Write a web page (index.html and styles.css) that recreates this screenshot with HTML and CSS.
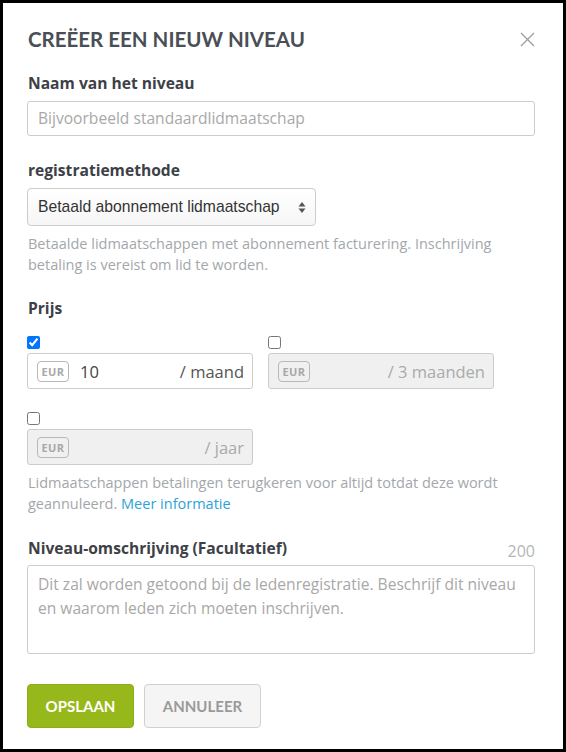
FILE: index.html
```html
<!DOCTYPE html>
<html lang="nl">
<head>
  <meta charset="UTF-8">
  <title>Creëer een nieuw niveau</title>
  <link rel="stylesheet" href="styles.css">
</head>
<body>

  <div class="modal">
    <div class="modal-header">
      <h2>Creëer een nieuw niveau</h2>
      <svg class="close" width="15" height="15" viewBox="0 0 15 15">
        <path d="M1 1 L14 14 M14 1 L1 14" stroke="#9a9da1" stroke-width="1.3" fill="none"/>
      </svg>
    </div>

    <label class="field-label">Naam van het niveau</label>
    <div class="text-input placeholder">Bijvoorbeeld standaardlidmaatschap</div>

    <label class="field-label gap">registratiemethode</label>
    <div class="select-box">
      <span>Betaald abonnement lidmaatschap</span>
      <svg width="8" height="13" viewBox="0 0 8 13">
        <path d="M4 1 L7.5 5.5 L0.5 5.5 Z" fill="#555"/>
        <path d="M4 12 L7.5 7.5 L0.5 7.5 Z" fill="#555"/>
      </svg>
    </div>
    <p class="help">Betaalde lidmaatschappen met abonnement facturering. Inschrijving betaling is vereist om lid te worden.</p>

    <label class="field-label gap-price">Prijs</label>
    <div class="price-grid">
      <div class="price">
        <input type="checkbox" checked>
        <div class="price-box">
          <span class="badge">EUR</span>
          <span class="amount">10</span>
          <span class="period">/ maand</span>
        </div>
      </div>
      <div class="price">
        <input type="checkbox">
        <div class="price-box disabled">
          <span class="badge">EUR</span>
          <span class="amount"></span>
          <span class="period">/ 3 maanden</span>
        </div>
      </div>
      <div class="price">
        <input type="checkbox">
        <div class="price-box disabled">
          <span class="badge">EUR</span>
          <span class="amount"></span>
          <span class="period">/ jaar</span>
        </div>
      </div>
    </div>
    <p class="help">Lidmaatschappen betalingen terugkeren voor altijd totdat deze wordt geannuleerd. <a href="#">Meer informatie</a></p>

    <div class="label-row">
      <label class="field-label">Niveau-omschrijving (Facultatief)</label>
      <span class="counter">200</span>
    </div>
    <div class="textarea placeholder">Dit zal worden getoond bij de ledenregistratie. Beschrijf dit niveau en waarom leden zich moeten inschrijven.</div>

    <div class="actions">
      <button class="btn btn-save">Opslaan</button>
      <button class="btn btn-cancel">Annuleer</button>
    </div>
  </div>

</body>
</html>
```

FILE: styles.css
```css
body {
  margin: 0;
  font-family: "Open Sans", sans-serif;
  background: #fff;
}
.modal {
  box-sizing: border-box;
  width: 566px;
  height: 752px;
  border: 3px solid #000;
  padding: 24px 28px 0 24px;
}
.modal-header {
  display: flex;
  justify-content: space-between;
  align-items: center;
  height: 24px;
}
.modal-header h2 {
  margin: 0 0 0 1px;
  font-family: Lato, sans-serif;
  font-weight: 700;
  font-size: 20.5px;
  line-height: 24px;
  text-transform: uppercase;
  color: #4a4e55;
}
.field-label {
  display: block;
  margin-top: 22px;
  margin-left: 1px;
  font-size: 15.6px;
  line-height: 20px;
  font-weight: 700;
  color: #3d4147;
}
.field-label.gap {
  margin-top: 24px;
}
.field-label.gap-price {
  margin-top: 23px;
}
.text-input {
  box-sizing: border-box;
  margin-top: 8px;
  height: 35px;
  border: 1px solid #ccc;
  border-radius: 3px;
  padding: 0 10px;
  font-size: 15.6px;
  line-height: 33px;
}
.placeholder {
  color: #a8a8a8;
}
.select-box {
  box-sizing: border-box;
  display: flex;
  align-items: center;
  justify-content: space-between;
  margin-top: 8px;
  width: 289px;
  height: 38px;
  border: 1px solid #ccc;
  border-radius: 4px;
  padding: 0 9px 0 10px;
  background: linear-gradient(#fff, #f6f6f6);
  font-family: "Liberation Sans", Arial, sans-serif;
  font-size: 15.7px;
  color: #333;
}
.help {
  margin: 7px 0 0 1px;
  font-size: 14.5px;
  line-height: 21px;
  color: #a3a7ab;
}
.help a {
  color: #2ca3d6;
  text-decoration: none;
}
.price-grid {
  display: grid;
  grid-template-columns: 226px 226px;
  column-gap: 15px;
  row-gap: 23px;
  margin-top: 18px;
}
.price input {
  display: block;
  margin: 0 0 4px 0;
  width: 13px;
  height: 13px;
}
.price-box {
  box-sizing: border-box;
  display: flex;
  align-items: center;
  height: 36px;
  border: 1px solid #ccc;
  border-radius: 3px;
  padding: 0 8px 0 9px;
  font-size: 16.5px;
}
.price-box.disabled {
  background: #f0f0f0;
}
.badge {
  box-sizing: border-box;
  width: 32px;
  height: 21px;
  border: 1px solid #b8b8b8;
  border-radius: 4px;
  font-size: 11px;
  font-weight: 700;
  line-height: 19px;
  text-align: center;
  color: #a8a8a8;
  letter-spacing: 0.5px;
}
.amount {
  flex: 1;
  margin-left: 11px;
  color: #444;
}
.period {
  color: #555;
}
.disabled .period {
  color: #aaa;
}
.label-row {
  display: flex;
  justify-content: space-between;
  align-items: flex-end;
  margin-top: 24px;
}
.label-row .field-label {
  margin-top: 0;
}
.counter {
  font-size: 16px;
  line-height: 20px;
  margin-bottom: -3px;
  color: #b5b5b5;
}
.textarea {
  box-sizing: border-box;
  margin-top: 7px;
  height: 89px;
  border: 1px solid #ccc;
  border-radius: 3px;
  padding: 6px 10px;
  font-size: 15.6px;
  line-height: 24px;
}
.actions {
  display: flex;
  gap: 10px;
  margin-top: 30px;
}
.btn {
  height: 44px;
  border-radius: 4px;
  font-family: Lato, sans-serif;
  font-weight: 700;
  font-size: 15px;
  text-transform: uppercase;
  cursor: pointer;
}
.btn-save {
  width: 107px;
  border: 1px solid #8fae16;
  background: #97b81b;
  color: #fff;
}
.btn-cancel {
  width: 117px;
  border: 1px solid #d0d0d0;
  background: #f5f5f5;
  color: #9a9a9a;
}
```
